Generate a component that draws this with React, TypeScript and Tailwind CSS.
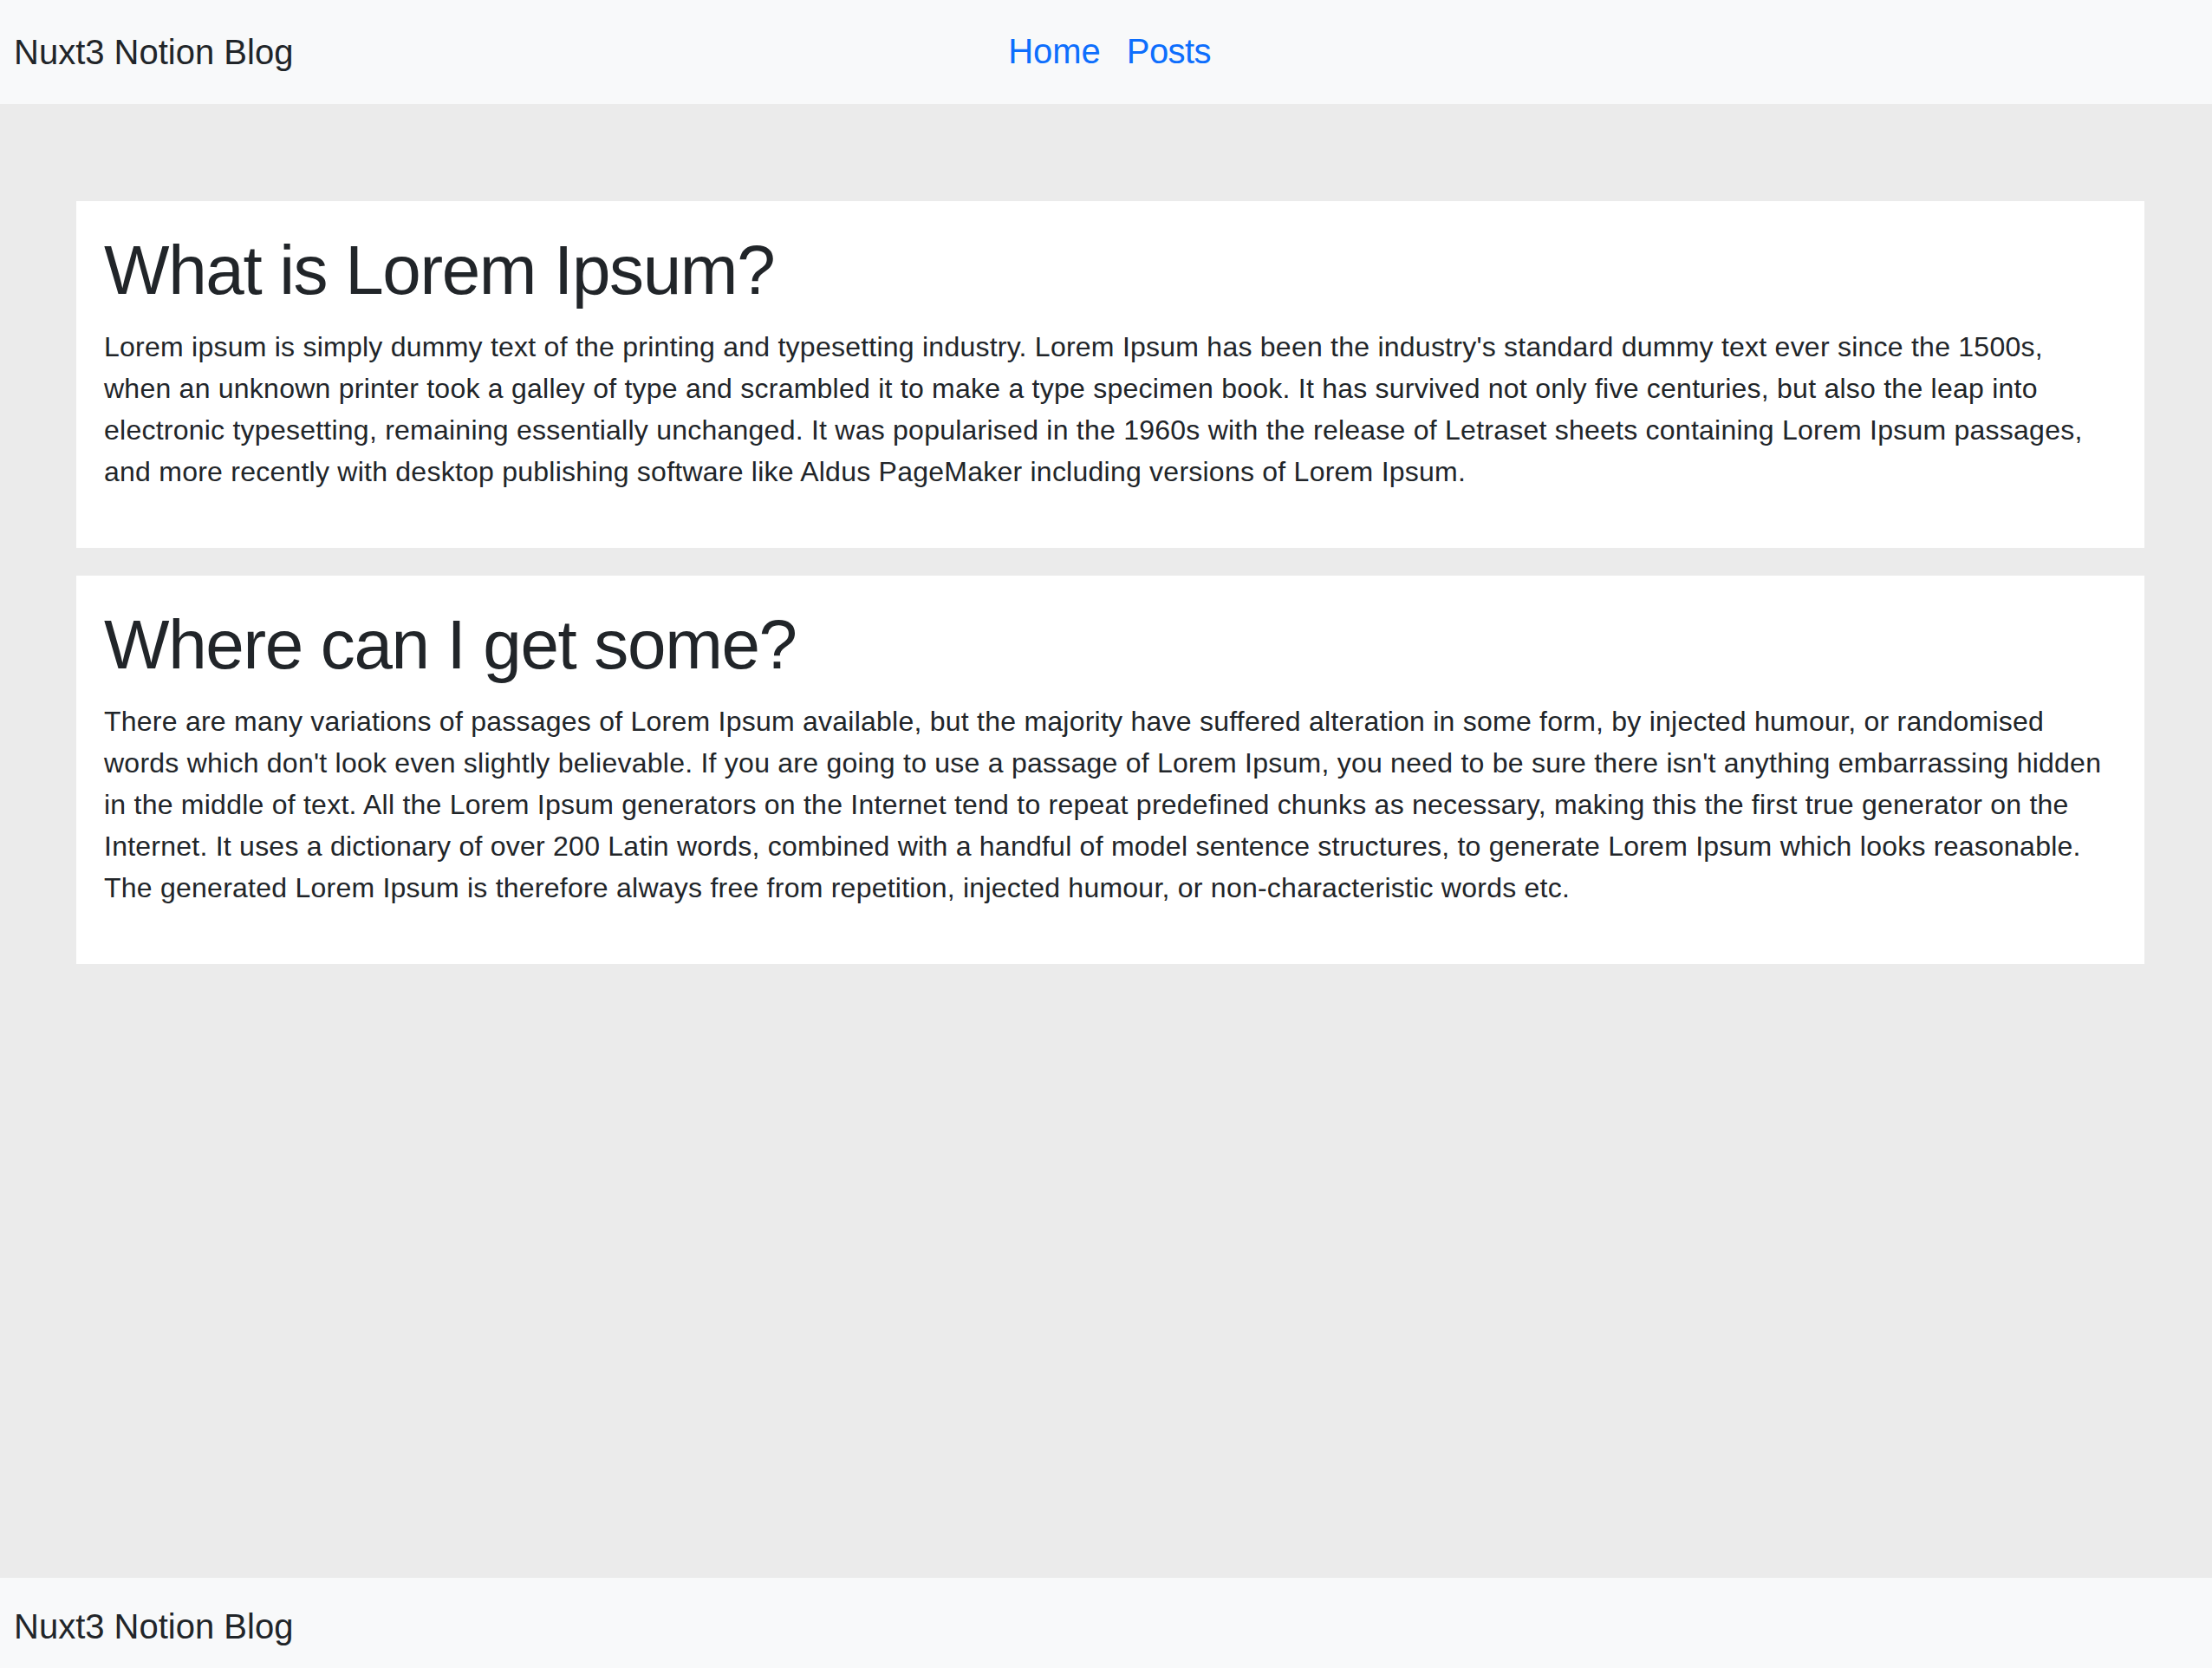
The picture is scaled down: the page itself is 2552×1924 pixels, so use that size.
import React from 'react'

const posts = [
  {
    title: 'What is Lorem Ipsum?',
    body: "Lorem ipsum is simply dummy text of the printing and typesetting industry. Lorem Ipsum has been the industry's standard dummy text ever since the 1500s, when an unknown printer took a galley of type and scrambled it to make a type specimen book. It has survived not only five centuries, but also the leap into electronic typesetting, remaining essentially unchanged. It was popularised in the 1960s with the release of Letraset sheets containing Lorem Ipsum passages, and more recently with desktop publishing software like Aldus PageMaker including versions of Lorem Ipsum.",
  },
  {
    title: 'Where can I get some?',
    body: "There are many variations of passages of Lorem Ipsum available, but the majority have suffered alteration in some form, by injected humour, or randomised words which don't look even slightly believable. If you are going to use a passage of Lorem Ipsum, you need to be sure there isn't anything embarrassing hidden in the middle of text. All the Lorem Ipsum generators on the Internet tend to repeat predefined chunks as necessary, making this the first true generator on the Internet. It uses a dictionary of over 200 Latin words, combined with a handful of model sentence structures, to generate Lorem Ipsum which looks reasonable. The generated Lorem Ipsum is therefore always free from repetition, injected humour, or non-characteristic words etc.",
  },
]

const App = () => {
  return (
    <div className="min-h-screen flex flex-col bg-[#ebebeb] text-[#212529] font-['Liberation_Sans',Arial,sans-serif]">
      {/* Navbar */}
      <header className="h-[120px] bg-[#f8f9fa] flex items-center px-4">
        <div className="flex-1">
          <span className="text-[40px] leading-[60px]">Nuxt3 Notion Blog</span>
        </div>
        <nav className="flex items-center ml-[6px] -mt-0.5">
          <a href="#" className="px-4 text-[40px] leading-[60px] text-[#0d6efd]">Home</a>
          <a href="#" className="px-[14px] text-[40px] leading-[60px] tracking-[-0.6px] text-[#0d6efd]">Posts</a>
        </nav>
        <div className="flex-1"></div>
      </header>

      {/* Posts */}
      <main className="flex-1 pl-[88px] pr-[78px] pt-[112px] flex flex-col gap-8">
        {posts.map((post) => (
          <article key={post.title} className="bg-white p-8">
            <h1 className="text-[80px] leading-[96px] tracking-[-1.35px] mb-4">{post.title}</h1>
            <p className="text-[32px] leading-[48px] tracking-[0.24px] mr-[6px] mb-8">{post.body}</p>
          </article>
        ))}
      </main>

      {/* Footer */}
      <footer className="h-[104px] bg-[#f8f9fa] flex items-center px-4 pt-2 mt-8">
        <span className="text-[40px] leading-[60px]">Nuxt3 Notion Blog</span>
      </footer>
    </div>
  )
}

export default App
